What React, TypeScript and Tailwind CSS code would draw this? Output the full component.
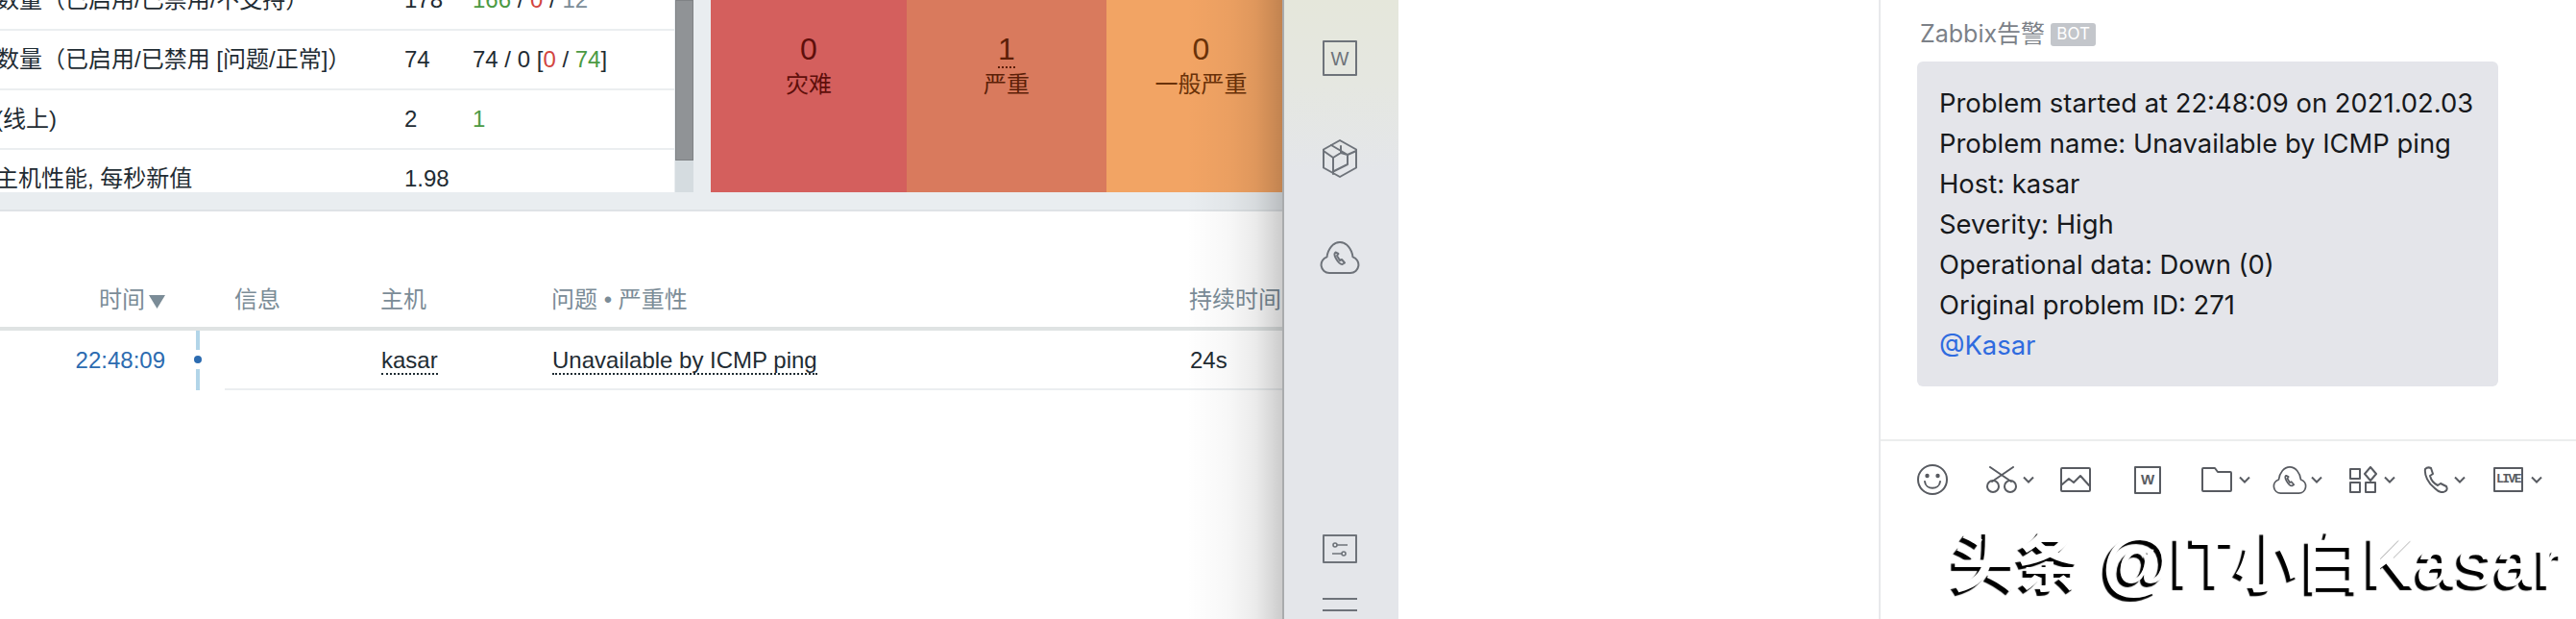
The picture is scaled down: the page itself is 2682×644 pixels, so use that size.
const sans = "font-['Liberation_Sans','Noto_Sans_CJK_SC',sans-serif]";

type Row = { label: string; value: string; extra?: React.ReactNode; indent: string };

const rows: Row[] = [
  {
    label: "数量（已启用/已禁用/不支持）",
    value: "178",
    indent: "-ml-[4px]",
    extra: (
      <>
        <span className="text-[#4b9a43]">166</span> / <span className="text-[#d2453f]">0</span> /{" "}
        <span className="text-[#7b8c97]">12</span>
      </>
    ),
  },
  {
    label: "数量（已启用/已禁用 [问题/正常]）",
    value: "74",
    indent: "-ml-[4px]",
    extra: (
      <>
        74 / 0 [<span className="text-[#d2453f]">0</span> / <span className="text-[#4b9a43]">74</span>]
      </>
    ),
  },
  { label: "(线上)", value: "2", indent: "-ml-[5px]", extra: <span className="text-[#4b9a43]">1</span> },
  { label: "主机性能, 每秒新值", value: "1.98", indent: "-ml-[5px]" },
];

const severities = [
  { n: "0", name: "灾难", bg: "w-[204px] bg-[#d45f5d] text-[#5e0f0b]", line: false },
  { n: "1", name: "严重", bg: "w-[208px] bg-[#d97a5d] text-[#5c1f08]", line: true },
  { n: "0", name: "一般严重", bg: "w-[197px] bg-[#f2a464] text-[#6a3208]", line: false },
];

function Ico({ w, h, vb, children }: { w: number; h: number; vb?: string; children: React.ReactNode }) {
  return (
    <svg
      width={w}
      height={h}
      viewBox={vb ?? `0 0 ${w} ${h}`}
      fill="none"
      stroke="currentColor"
      strokeWidth="2"
      strokeLinecap="round"
      strokeLinejoin="round"
      className="shrink-0"
    >
      {children}
    </svg>
  );
}

function Chevron() {
  return (
    <svg width="12" height="8" viewBox="0 0 12 8" fill="none" stroke="currentColor" strokeWidth="2" className="shrink-0">
      <path d="M1 1.5l5 5 5-5" />
    </svg>
  );
}

function CloudPhone({ w, h }: { w: number; h: number }) {
  return (
    <Ico w={w} h={h} vb="0 0 42 34">
      <path d="M10 33a8.5 8.5 0 0 1-2.500-16.600C8.500 8 14 1 21 1s12.500 7 13.500 15.400A8.500 8.500 0 0 1 32 33z" />
      <path d="M16.500 11.500c-1.500 1-1.500 3 .5 6.500s4 6 6.500 6l2.500-1.500-3-3.500-2 1-3-5 1.500-2z" />
    </Ico>
  );
}

function WDoc({ w, h, size }: { w: number; h: number; size: string }) {
  return (
    <div
      className={`flex items-center justify-center border-2 border-current rounded-[1px] ${size} font-['Liberation_Sans',sans-serif]`}
      style={{ width: w, height: h }}
    >
      W
    </div>
  );
}

export default function App() {
  return (
    <div className={`relative flex w-[2682px] h-[644px] overflow-hidden bg-white ${sans}`}>
      {/* zabbix page behind the sidebar */}
      <div className="relative w-[1335px] shrink-0 overflow-hidden">
        <div className="flex h-[200px] overflow-hidden bg-[#e9edf0]">
          <div className="w-[702px] shrink-0 bg-white -mt-[30px] h-[231px] text-[24px] text-[#1f2c33]">
            {rows.map((r) => (
              <div key={r.label} className="flex items-center h-[62px] border-b-[2px] border-[#ebeef0] overflow-hidden">
                <div className="w-[421px] shrink-0 whitespace-nowrap">
                  <div className={r.indent}>{r.label}</div>
                </div>
                <div className="w-[71px] shrink-0">{r.value}</div>
                <div className="whitespace-nowrap">{r.extra}</div>
              </div>
            ))}
          </div>
          <div className="w-[19px] ml-[1px] shrink-0 bg-[#d5dce0]">
            <div className="h-[167px] bg-[#909396] border border-[#7f8285]" />
          </div>
          <div className="flex ml-[18px] shrink-0">
            {severities.map((s) => (
              <div key={s.name} className={`flex flex-col items-center pt-[32px] shrink-0 ${s.bg}`}>
                <div className="relative text-[32px] leading-[38px]">
                  {s.n}
                  {s.line && (
                    <div className="absolute left-0 bottom-[-1px] w-[18px] border-b-2 border-dotted border-current" />
                  )}
                </div>
                <div className="text-[24px] leading-[36px]">{s.name}</div>
              </div>
            ))}
          </div>
        </div>
        <div className="h-[20px] bg-[#e9edf0] border-b-2 border-[#dfe3e6]" />

        <div className="flex items-center h-[124px] pt-[64px] text-[24px] text-[#7b8c97] border-b-[4px] border-[#dfe3e3] box-border">
          <div className="w-[172px] text-right flex items-center justify-end gap-[4px] shrink-0 whitespace-nowrap">
            时间
            <svg width="17" height="14" viewBox="0 0 17 14" className="mt-[3px] fill-current">
              <path d="M0 0h17L8.5 14z" />
            </svg>
          </div>
          <div className="ml-[72px] w-[152px]">信息</div>
          <div className="w-[178px]">主机</div>
          <div className="w-[664px] whitespace-nowrap">问题 • 严重性</div>
          <div className="whitespace-nowrap">持续时间</div>
        </div>

        <div className="flex h-[62px] text-[24px] text-[#1f2c33]">
          <div className="w-[172px] shrink-0 pt-[13px] text-right text-[#2c6bb0]">22:48:09</div>
          <div className="relative w-[62px] shrink-0">
            <div className="absolute left-[32px] top-0 h-[62px] w-[4px] bg-[#b2d5e8]" />
            <div className="absolute left-[28px] top-[20px] h-[20px] w-[12px] flex items-center justify-center bg-white">
              <div className="h-[8px] w-[8px] rounded-full bg-[#2c6bb0]" />
            </div>
          </div>
          <div className="flex flex-1 pt-[13px] border-b-2 border-[#ebeef0]">
            <div className="w-[163px] shrink-0" />
            <div className="w-[178px] shrink-0">
              <span className="inline-block leading-[27px] border-b-2 border-dotted border-[#1f2c33]">kasar</span>
            </div>
            <div className="w-[664px] shrink-0 whitespace-nowrap">
              <span className="inline-block leading-[27px] border-b-2 border-dotted border-[#1f2c33]">
                Unavailable by ICMP ping
              </span>
            </div>
            <div>24s</div>
          </div>
        </div>

        {/* sidebar drop shadow over the page */}
        <div className="absolute right-0 top-0 bottom-0 w-[100px] pointer-events-none bg-[linear-gradient(to_right,rgba(0,0,0,0),rgba(0,0,0,0.03)_45%,rgba(0,0,0,0.08)_72%,rgba(0,0,0,0.2))]" />
      </div>

      {/* chat sidebar */}
      <div className="w-[121px] shrink-0 flex flex-col items-center pt-[42px] pr-[3px] pb-[8px] border-l-2 border-[#a9abad] text-[#6e737a] bg-[linear-gradient(to_bottom,#e5e7db,#e5e7e1_90px,#e4e6ea_180px,#e4e6ea)]">
        <WDoc w={36} h={37} size="text-[20px]" />
        <div className="mt-[66px]">
          <Ico w={36} h={40}>
            <path d="M18 1l17 9.500v19L18 39 1 29.500v-19z" />
            <path d="M9 6l17 10v10l-14 7M1 12l10 7v17M11 19l8-5 7 2M35 12l-9 4M19 14V7" />
          </Ico>
        </div>
        <div className="mt-[66px]">
          <CloudPhone w={42} h={34} />
        </div>
        <div className="mt-auto flex h-[30px] w-[36px] flex-col justify-center items-center border-2 border-current rounded-[1px]">
          <svg width="16" height="17" viewBox="0 0 16 17" fill="none" stroke="currentColor" strokeWidth="1.6">
            <circle cx="3" cy="4" r="2" />
            <path d="M5 4h11M0 13h10" />
            <circle cx="12" cy="13" r="2" />
          </svg>
        </div>
        <div className="mt-[36px] h-[2px] w-[36px] bg-current" />
        <div className="mt-[10px] h-[2px] w-[36px] bg-current" />
      </div>

      <div className="w-[500px] shrink-0 bg-white" />

      {/* chat pane */}
      <div className="flex-1 flex flex-col border-l-2 border-[#e8e9eb] font-['Inter','Noto_Sans_CJK_SC',sans-serif]">
        <div className="h-[459px] shrink-0 pl-[38px] pt-[24px] border-b-2 border-[#eceded]">
          <div className="flex h-[24px] items-center ml-[3px] text-[#7c8188] text-[25px] whitespace-nowrap">
            Zabbix告警
            <span className="ml-[6px] flex h-[24px] w-[47px] items-center justify-center rounded-[3px] bg-[#c3c6cb] text-[17px] text-white">
              BOT
            </span>
          </div>
          <div className="mt-[16px] w-[605px] h-[338px] rounded-[6px] bg-[#e4e5ea] px-[23px] pt-[22px] text-[27.4px] leading-[42px] text-[#17191c] whitespace-nowrap">
            <div>Problem started at 22:48:09 on 2021.02.03</div>
            <div>Problem name: Unavailable by ICMP ping</div>
            <div>Host: kasar</div>
            <div>Severity: High</div>
            <div>Operational data: Down (0)</div>
            <div>Original problem ID: 271</div>
            <div className="text-[#2f6bdf]">@Kasar</div>
          </div>
        </div>

        <div className="flex items-center h-[80px] pl-[38px] text-[#585b61] shrink-0">
          <Ico w={32} h={32}>
            <circle cx="16" cy="16" r="15" />
            <circle cx="10.500" cy="12" r="1.200" fill="currentColor" />
            <circle cx="21.500" cy="12" r="1.200" fill="currentColor" />
            <path d="M8 18c1 9 15 9 16 0" />
          </Ico>
          <div className="ml-[40px]">
            <Ico w={32} h={28}>
              <path d="M4 1l22 15M28 1L6 16" />
              <circle cx="7" cy="21" r="6" />
              <circle cx="25" cy="21" r="6" />
            </Ico>
          </div>
          <div className="ml-[6px]"><Chevron /></div>
          <div className="ml-[27px]">
            <Ico w={32} h={26}>
              <rect x="1" y="1" width="30" height="24" rx="1" />
              <path d="M2 18l7-6 5 4 7-7 9 10" />
            </Ico>
          </div>
          <div className="ml-[45px]"><WDoc w={28} h={29} size="text-[15px] font-bold" /></div>
          <div className="ml-[42px]">
            <Ico w={32} h={26}>
              <path d="M1 24V2a1 1 0 0 1 1-1h12l3 4h13a1 1 0 0 1 1 1v18a1 1 0 0 1-1 1H2a1 1 0 0 1-1-1z" />
            </Ico>
          </div>
          <div className="ml-[7px]"><Chevron /></div>
          <div className="ml-[23px]">
            <CloudPhone w={36} h={29} />
          </div>
          <div className="ml-[4px]"><Chevron /></div>
          <div className="ml-[28px]">
            <Ico w={29} h={28}>
              <rect x="1" y="3" width="10" height="10" />
              <path d="M22 1l6 7-6 7-6-7z" />
              <rect x="1" y="17" width="10" height="10" />
              <rect x="17" y="17" width="10" height="10" />
            </Ico>
          </div>
          <div className="ml-[7px]"><Chevron /></div>
          <div className="ml-[29px]">
            <Ico w={27} h={28}>
              <path d="M2 3c2-2 4-2 6-1l2 6-3 2c1 4 4 8 8 10l3-2 6 3c1 2 1 4-1 5-3 2-7 1-11-3C5 18 1 9 2 3z" />
            </Ico>
          </div>
          <div className="ml-[5px]"><Chevron /></div>
          <div className="ml-[29px] flex h-[26px] w-[31px] items-center justify-center border-2 border-current rounded-[1px] text-[13px] font-bold font-['Liberation_Mono',monospace] tracking-[-1.500px]">
            LIVE
          </div>
          <div className="ml-[8px]"><Chevron /></div>
        </div>

        <div className="ml-[74px] mt-[6px] whitespace-nowrap text-[74px] leading-[80px] font-bold text-white font-['Liberation_Sans','Noto_Sans_CJK_SC',sans-serif] [text-shadow:-4px_4px_1px_#000]">
          <span className="text-[68px]">头条</span> @IT<span className="text-[68px]">小白</span>Kasar
        </div>
      </div>
    </div>
  );
}
